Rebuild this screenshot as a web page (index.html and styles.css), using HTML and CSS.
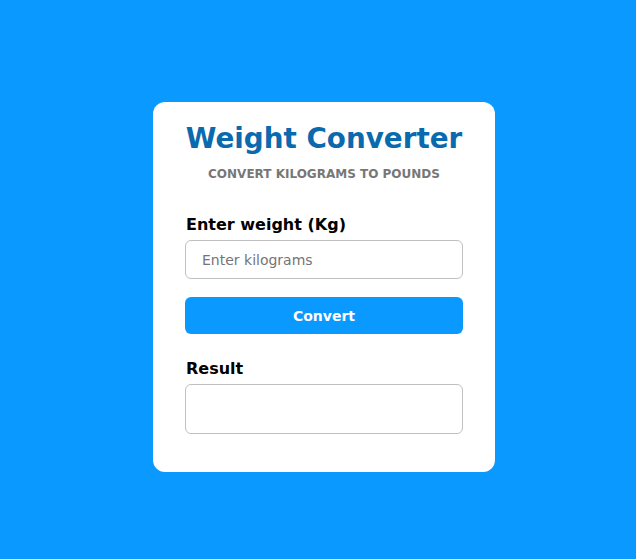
FILE: index.html
```html
<!DOCTYPE html>
<html>
<head>
<meta charset="utf-8">
<link rel="stylesheet" href="styles.css">
</head>
<body>
<div class="page">
  <div class="card">
    <h1 class="title">Weight Converter</h1>
    <p class="subtitle">CONVERT KILOGRAMS TO POUNDS</p>
    <label class="label" for="kg">Enter weight (Kg)</label>
    <input class="input" id="kg" type="text" placeholder="Enter kilograms">
    <button class="button">Convert</button>
    <div class="label result-label">Result</div>
    <div class="result"></div>
  </div>
</div>
</body>
</html>
```
FILE: styles.css
```css
html, body {
  margin: 0;
  padding: 0;
}
body {
  background: #0a99ff;
  font-family: "DejaVu Sans", Verdana, sans-serif;
}
.page {
  box-sizing: border-box;
  height: 559px;
  padding: 15px 0 0 12px;
  display: flex;
  align-items: center;
  justify-content: center;
}
.card {
  box-sizing: border-box;
  width: 342px;
  background: #fff;
  border-radius: 12px;
  padding: 20px 32px 38px;
  display: flex;
  flex-direction: column;
}
.title {
  margin: 0;
  font-size: 27.8px;
  font-weight: bold;
  color: #0a6aad;
  text-align: center;
  line-height: 34px;
  white-space: nowrap;
}
.subtitle {
  margin: 11px 0 0;
  font-size: 12px;
  font-weight: bold;
  color: #777;
  text-align: center;
  line-height: 14px;
}
.label {
  margin-top: 34px;
  font-size: 16px;
  font-weight: bold;
  color: #000;
  line-height: 20px;
  padding-left: 1px;
}
.input {
  box-sizing: border-box;
  flex-shrink: 0;
  margin: 5px 0 0;
  height: 39px;
  width: 100%;
  border: 1px solid #c0c0c0;
  border-radius: 6px;
  padding: 0 16px;
  font-family: "DejaVu Sans", Verdana, sans-serif;
  font-size: 14px;
  color: #333;
  outline: none;
}
.input::placeholder {
  color: #757575;
}
.button {
  flex-shrink: 0;
  margin: 18px 0 0;
  height: 37px;
  border: none;
  border-radius: 6px;
  background: #0a99ff;
  color: #fff;
  font-family: "DejaVu Sans", Verdana, sans-serif;
  font-size: 14px;
  font-weight: bold;
}
.result-label {
  margin-top: 25px;
}
.result {
  box-sizing: border-box;
  flex-shrink: 0;
  margin-top: 5px;
  height: 50px;
  border: 1px solid #c0c0c0;
  border-radius: 6px;
}
```
